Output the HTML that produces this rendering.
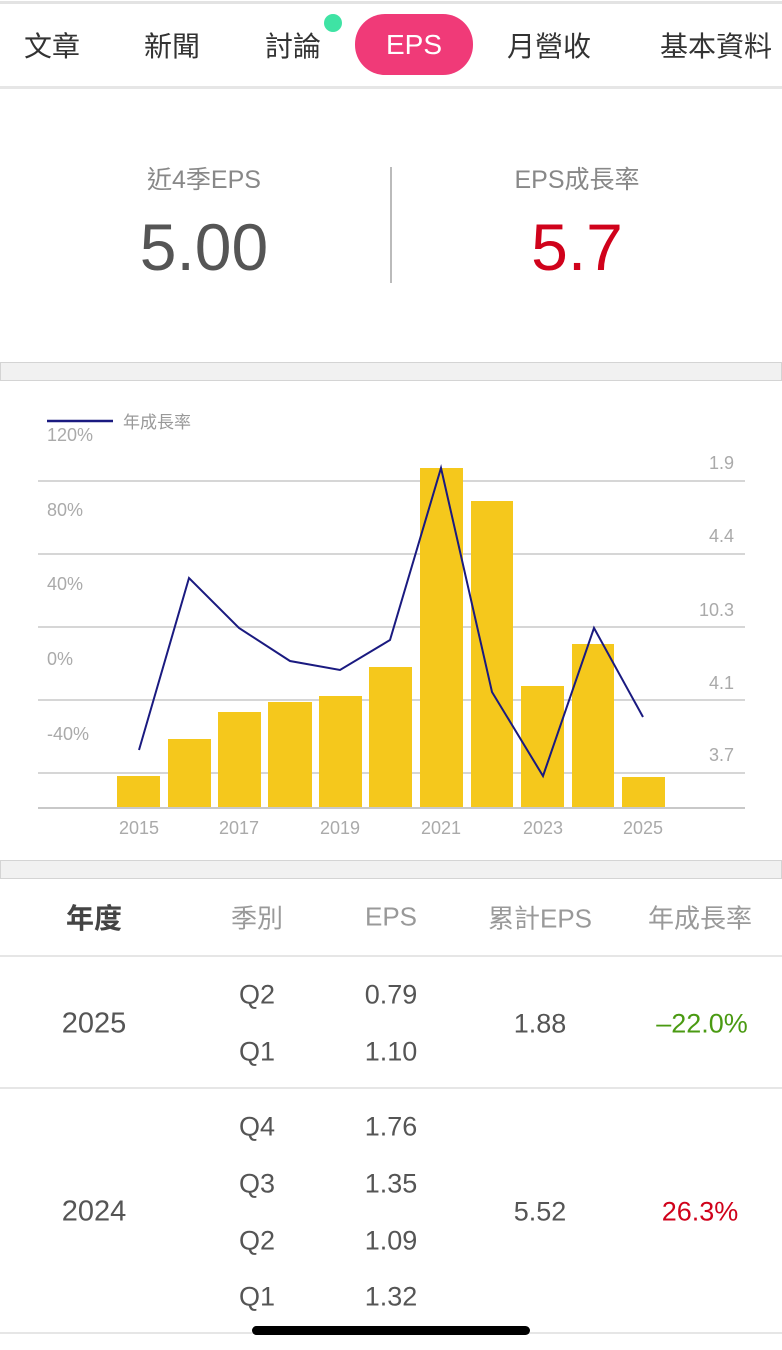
<!DOCTYPE html>
<html><head><meta charset="utf-8"><style>
*{margin:0;padding:0;box-sizing:border-box}
body{width:782px;height:1350px;background:#fff;position:relative;overflow:hidden;font-family:"Liberation Sans","Noto Sans CJK TC",sans-serif}
.a{position:absolute;white-space:nowrap;transform:translate(-50%,-50%)}
.strip{position:absolute;left:0;width:782px;height:19px;background:#f1f1f1;border:1.5px solid #d4d4d4}
.hl{position:absolute;left:0;width:782px;height:2px;background:#e6e6e6}
.nav{font-size:28px;color:#333;top:45px}
.th{font-size:26px;color:#999;top:917px}
.td{font-size:27px;color:#555}
</style></head><body>
<div class="hl" style="top:1px;height:3px;background:#e3e3e3"></div>
<div class="a nav" style="left:52px">文章</div>
<div class="a nav" style="left:172px">新聞</div>
<div class="a nav" style="left:293px">討論</div>
<div style="position:absolute;left:324px;top:14px;width:18px;height:18px;border-radius:50%;background:#3fe3a4"></div>
<div style="position:absolute;left:355px;top:14px;width:118px;height:61px;border-radius:30px;background:#f03a78"></div>
<div class="a nav" style="left:414px;color:#fff">EPS</div>
<div class="a nav" style="left:549px">月營收</div>
<div class="a nav" style="left:716px">基本資料</div>
<div class="hl" style="top:86px;height:3px"></div>

<div class="a" style="left:204px;top:178px;font-size:25px;color:#888">近4季EPS</div>
<div class="a" style="left:577px;top:178px;font-size:25px;color:#888">EPS成長率</div>
<div class="a" style="left:204px;top:247px;font-size:66px;color:#555">5.00</div>
<div class="a" style="left:577px;top:247px;font-size:66px;color:#d0021b">5.7</div>
<div style="position:absolute;left:390px;top:167px;width:2px;height:116px;background:#bbb"></div>

<div class="strip" style="top:362px"></div>

<svg style="position:absolute;left:0;top:400px" width="782" height="450" viewBox="0 400 782 450" font-family="Liberation Sans, sans-serif">
<g stroke="#c8c8c8" stroke-width="1.5">
<line x1="38" x2="745" y1="481" y2="481"/><line x1="38" x2="745" y1="554" y2="554"/><line x1="38" x2="745" y1="627" y2="627"/><line x1="38" x2="745" y1="700" y2="700"/><line x1="38" x2="745" y1="773" y2="773"/>
</g>
<g fill="#f5c81c">
<rect x="117" y="776" width="43" height="32"/><rect x="168" y="739" width="43" height="69"/><rect x="218" y="712" width="43" height="96"/><rect x="268" y="702" width="44" height="106"/><rect x="319" y="696" width="43" height="112"/><rect x="369" y="667" width="43" height="141"/><rect x="420" y="468" width="43" height="340"/><rect x="471" y="501" width="42" height="307"/><rect x="521" y="686" width="43" height="122"/><rect x="572" y="644" width="42" height="164"/><rect x="622" y="777" width="43" height="31"/>
</g>
<line x1="38" x2="745" y1="808" y2="808" stroke="#c8c8c8" stroke-width="2"/>
<polyline fill="none" stroke="#1a1a80" stroke-width="2" points="139,750 189,578 239,628 290,661 340,670 390,640 441,468 492,692 543,776 594,628 643,717"/>
<line x1="47" x2="113" y1="421" y2="421" stroke="#1a1a80" stroke-width="2.5"/>
<text x="123" y="428" font-size="17" fill="#999" font-family="Liberation Sans, Noto Sans CJK TC, sans-serif">年成長率</text>
<g font-size="18" fill="#aaa">
<text x="47" y="441">120%</text><text x="47" y="516">80%</text><text x="47" y="590">40%</text><text x="47" y="665">0%</text><text x="47" y="740">-40%</text>
<g text-anchor="end"><text x="734" y="469">1.9</text><text x="734" y="542">4.4</text><text x="734" y="616">10.3</text><text x="734" y="689">4.1</text><text x="734" y="761">3.7</text></g>
<g text-anchor="middle"><text x="139" y="834">2015</text><text x="239" y="834">2017</text><text x="340" y="834">2019</text><text x="441" y="834">2021</text><text x="543" y="834">2023</text><text x="643" y="834">2025</text></g>
</g>
</svg>

<div class="strip" style="top:860px"></div>

<div class="a th" style="left:94px;color:#444;font-weight:bold;font-size:28px">年度</div>
<div class="a th" style="left:257px">季別</div>
<div class="a th" style="left:391px">EPS</div>
<div class="a th" style="left:540px">累計EPS</div>
<div class="a th" style="left:700px">年成長率</div>
<div class="hl" style="top:955px"></div>

<div class="a td" style="left:94px;top:1024px;font-size:29px">2025</div>
<div class="a td" style="left:257px;top:995px">Q2</div>
<div class="a td" style="left:391px;top:995px">0.79</div>
<div class="a td" style="left:257px;top:1052px">Q1</div>
<div class="a td" style="left:391px;top:1052px">1.10</div>
<div class="a td" style="left:540px;top:1024px">1.88</div>
<div class="a td" style="left:702px;top:1024px;color:#4a9a12">–22.0%</div>
<div class="hl" style="top:1087px"></div>

<div class="a td" style="left:94px;top:1212px;font-size:29px">2024</div>
<div class="a td" style="left:257px;top:1127px">Q4</div>
<div class="a td" style="left:391px;top:1127px">1.76</div>
<div class="a td" style="left:257px;top:1184px">Q3</div>
<div class="a td" style="left:391px;top:1184px">1.35</div>
<div class="a td" style="left:257px;top:1241px">Q2</div>
<div class="a td" style="left:391px;top:1241px">1.09</div>
<div class="a td" style="left:257px;top:1297px">Q1</div>
<div class="a td" style="left:391px;top:1297px">1.32</div>
<div class="a td" style="left:540px;top:1212px">5.52</div>
<div class="a td" style="left:700px;top:1212px;color:#d0021b">26.3%</div>
<div class="hl" style="top:1332px"></div>
<div style="position:absolute;left:252px;top:1326px;width:278px;height:9px;border-radius:5px;background:#000"></div>
</body></html>
